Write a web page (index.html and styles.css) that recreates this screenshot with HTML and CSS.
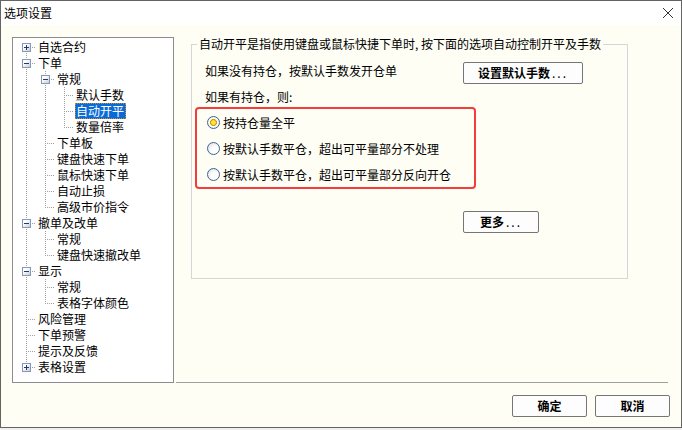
FILE: index.html
```html
<!DOCTYPE html>
<html lang="zh-CN">
<head>
    <meta charset="UTF-8">
    <meta name="viewport" content="width=device-width, initial-scale=1.0">
    <title>选项设置</title>
    <link rel="stylesheet" href="styles.css">
</head>
<body>
<div class="win">
    <div class="titlebar">
        <span class="title">选项设置</span>
        <svg class="close" width="12" height="12" viewBox="0 0 12 12"><path d="M1 1L11 11M11 1L1 11" stroke="#333" stroke-width="1" fill="none"/></svg>
    </div>
    <div class="client">
        <div class="main">
            <div class="tree">
                <div class="row"><span class="g g-f"><i class="exp plus"></i></span><span class="lbl">自选合约</span></div>
                <div class="row"><span class="g g-t"><i class="exp minus"></i></span><span class="lbl">下单</span></div>
                <div class="row"><span class="g g-v"></span><span class="g g-t"><i class="exp minus"></i></span><span class="lbl">常规</span></div>
                <div class="row"><span class="g g-v"></span><span class="g g-v"></span><span class="g g-t"></span><span class="lbl">默认手数</span></div>
                <div class="row"><span class="g g-v"></span><span class="g g-v"></span><span class="g g-t"></span><span class="lbl sel">自动开平</span></div>
                <div class="row"><span class="g g-v"></span><span class="g g-v"></span><span class="g g-l"></span><span class="lbl">数量倍率</span></div>
                <div class="row"><span class="g g-v"></span><span class="g g-t"></span><span class="lbl">下单板</span></div>
                <div class="row"><span class="g g-v"></span><span class="g g-t"></span><span class="lbl">键盘快速下单</span></div>
                <div class="row"><span class="g g-v"></span><span class="g g-t"></span><span class="lbl">鼠标快速下单</span></div>
                <div class="row"><span class="g g-v"></span><span class="g g-t"></span><span class="lbl">自动止损</span></div>
                <div class="row"><span class="g g-v"></span><span class="g g-l"></span><span class="lbl">高级市价指令</span></div>
                <div class="row"><span class="g g-t"><i class="exp minus"></i></span><span class="lbl">撤单及改单</span></div>
                <div class="row"><span class="g g-v"></span><span class="g g-t"></span><span class="lbl">常规</span></div>
                <div class="row"><span class="g g-v"></span><span class="g g-l"></span><span class="lbl">键盘快速撤改单</span></div>
                <div class="row"><span class="g g-t"><i class="exp minus"></i></span><span class="lbl">显示</span></div>
                <div class="row"><span class="g g-v"></span><span class="g g-t"></span><span class="lbl">常规</span></div>
                <div class="row"><span class="g g-v"></span><span class="g g-l"></span><span class="lbl">表格字体颜色</span></div>
                <div class="row"><span class="g g-t"></span><span class="lbl">风险管理</span></div>
                <div class="row"><span class="g g-t"></span><span class="lbl">下单预警</span></div>
                <div class="row"><span class="g g-t"></span><span class="lbl">提示及反馈</span></div>
                <div class="row"><span class="g g-l"><i class="exp plus"></i></span><span class="lbl">表格设置</span></div>
            </div>
            <div class="side">
                <fieldset class="group">
                    <legend>自动开平是指使用键盘或鼠标快捷下单时, 按下面的选项自动控制开平及手数</legend>
                    <div class="gbody">
                        <div class="line1">
                            <span class="txt">如果没有持仓，按默认手数发开仓单</span>
                            <button class="btn btn-set">设置默认手数<span class="dots">...</span></button>
                        </div>
                        <div class="txt q">如果有持仓，则:</div>
                        <div class="mark">
                            <div class="opt"><span class="radio on"></span>按持仓量全平</div>
                            <div class="opt"><span class="radio"></span>按默认手数平仓，超出可平量部分不处理</div>
                            <div class="opt"><span class="radio"></span>按默认手数平仓，超出可平量部分反向开仓</div>
                        </div>
                        <button class="btn btn-more">更多<span class="dots">...</span></button>
                    </div>
                </fieldset>
                <div class="sep"></div>
            </div>
        </div>
        <div class="foot">
            <button class="btn btn-ok">确定</button>
            <button class="btn btn-ok">取消</button>
        </div>
    </div>
</div>
</body>
</html>
```

FILE: styles.css
```css
html, body {
    margin: 0;
    background: #f0f0f0;
}
body {
    font-family: "Noto Sans CJK SC", sans-serif;
    font-size: 12px;
    color: #000;
}

.win {
    width: 682px;
    height: 428px;
    box-sizing: border-box;
    border: 1px solid #646464;
    background: #fefef5;
    display: flex;
    flex-direction: column;
}
.titlebar {
    flex: none;
    height: 24px;
    background: #fff;
    display: flex;
    align-items: center;
    justify-content: space-between;
    padding: 0 7px 0 3px;
}
.title {
    line-height: 16px;
}

.client {
    flex: 1;
    display: flex;
    flex-direction: column;
    padding: 12px 11px 0 11px;
}
.main {
    display: flex;
    height: 346px;
}

/* tree */
.tree {
    width: 162px;
    box-sizing: border-box;
    border: 1px solid #8c8c8c;
    background: #fff;
    padding: 1px 0 0 4px;
}
.row {
    display: flex;
    height: 16px;
    white-space: nowrap;
}
.g {
    flex: none;
    width: 19px;
    height: 16px;
    display: flex;
    justify-content: center;
    align-items: flex-start;
}
.g-v {
    background: repeating-linear-gradient(to bottom, #a0a0a0 0 1px, transparent 1px 2px) 9px 0 / 1px 16px no-repeat;
}
.g-t {
    background:
        repeating-linear-gradient(to bottom, #a0a0a0 0 1px, transparent 1px 2px) 9px 0 / 1px 16px no-repeat,
        repeating-linear-gradient(to right, #a0a0a0 0 1px, transparent 1px 2px) 11px 8px / 8px 1px no-repeat;
}
.g-l {
    background:
        repeating-linear-gradient(to bottom, #a0a0a0 0 1px, transparent 1px 2px) 9px 0 / 1px 9px no-repeat,
        repeating-linear-gradient(to right, #a0a0a0 0 1px, transparent 1px 2px) 11px 8px / 8px 1px no-repeat;
}
.g-f {
    background:
        repeating-linear-gradient(to bottom, #a0a0a0 0 1px, transparent 1px 2px) 9px 8px / 1px 8px no-repeat,
        repeating-linear-gradient(to right, #a0a0a0 0 1px, transparent 1px 2px) 11px 8px / 8px 1px no-repeat;
}
.exp {
    width: 9px;
    height: 9px;
    margin-top: 4px;
    box-sizing: border-box;
    border: 1px solid #8898b4;
}
.exp.minus {
    background:
        linear-gradient(#1e3a80, #1e3a80) center / 5px 1px no-repeat,
        linear-gradient(135deg, #fff 30%, #c9ccd2);
}
.exp.plus {
    background:
        linear-gradient(#1e3a80, #1e3a80) center / 5px 1px no-repeat,
        linear-gradient(#1e3a80, #1e3a80) center / 1px 5px no-repeat,
        linear-gradient(135deg, #fff 30%, #c9ccd2);
}
.lbl {
    margin-left: 1px;
    padding: 0 2px 0 1px;
    line-height: 16px;
    height: 16px;
}
.lbl.sel {
    background: #0a6bd6;
    color: #fff;
    outline: 1px dotted #d08a30;
    outline-offset: -1px;
}

/* right side */
.side {
    flex: 1;
    display: flex;
    flex-direction: column;
    margin-left: 1px;
}
.group {
    margin: 0 42px 0 16px;
    padding: 0;
    border: 1px solid #d6d6d6;
    min-width: 0;
}
.group legend {
    margin-left: 5px;
    padding: 0 2px;
    line-height: 14px;
}
.gbody {
    padding: 0 0 45px 3px;
}
.txt {
    line-height: 16px;
}
.line1 {
    display: flex;
    justify-content: space-between;
    align-items: flex-start;
    height: 22px;
    margin-top: 11px;
    padding: 0 44px 0 10px;
}
.line1 .txt {
    padding-top: 1px;
}
.q {
    margin-top: 5px;
    padding-left: 10px;
}
.mark {
    width: 281px;
    box-sizing: border-box;
    margin-top: 2px;
    border: 2px solid #f33c3c;
    border-radius: 4px;
    padding-left: 10px;
}
.opt {
    display: flex;
    align-items: center;
    height: 26px;
    white-space: nowrap;
}
.radio {
    flex: none;
    width: 13px;
    height: 13px;
    box-sizing: border-box;
    border-radius: 50%;
    border: 1px solid #3a6690;
    background: radial-gradient(circle at 65% 65%, #fff 0 35%, #d4d9e2 100%);
    margin-right: 3px;
}
.radio.on {
    background: radial-gradient(circle, #ffe640 0 2px, #d79a00 2.6px 3.2px, #fff 3.8px, #d4d9e2 100%);
}

.btn {
    font-family: "Noto Sans CJK SC", sans-serif;
    font-size: 12px;
    font-weight: bold;
    color: #000;
    background: #fdfdfd;
    border: 1px solid #767676;
    border-radius: 2px;
    height: 22px;
    padding: 0;
    line-height: 18px;
}
.dots {
    font-weight: normal;
    letter-spacing: 2px;
    margin-left: 2px;
}
.btn-set {
    width: 120px;
}
.btn-more {
    display: block;
    width: 76px;
    margin: 22px 0 0 268px;
}
.sep {
    margin: auto 2px 0 1px;
    height: 1px;
    background: #a0a0a0;
}

.foot {
    display: flex;
    justify-content: flex-end;
    gap: 8px;
    margin-top: 12px;
}
.btn-ok {
    width: 75px;
}
```
